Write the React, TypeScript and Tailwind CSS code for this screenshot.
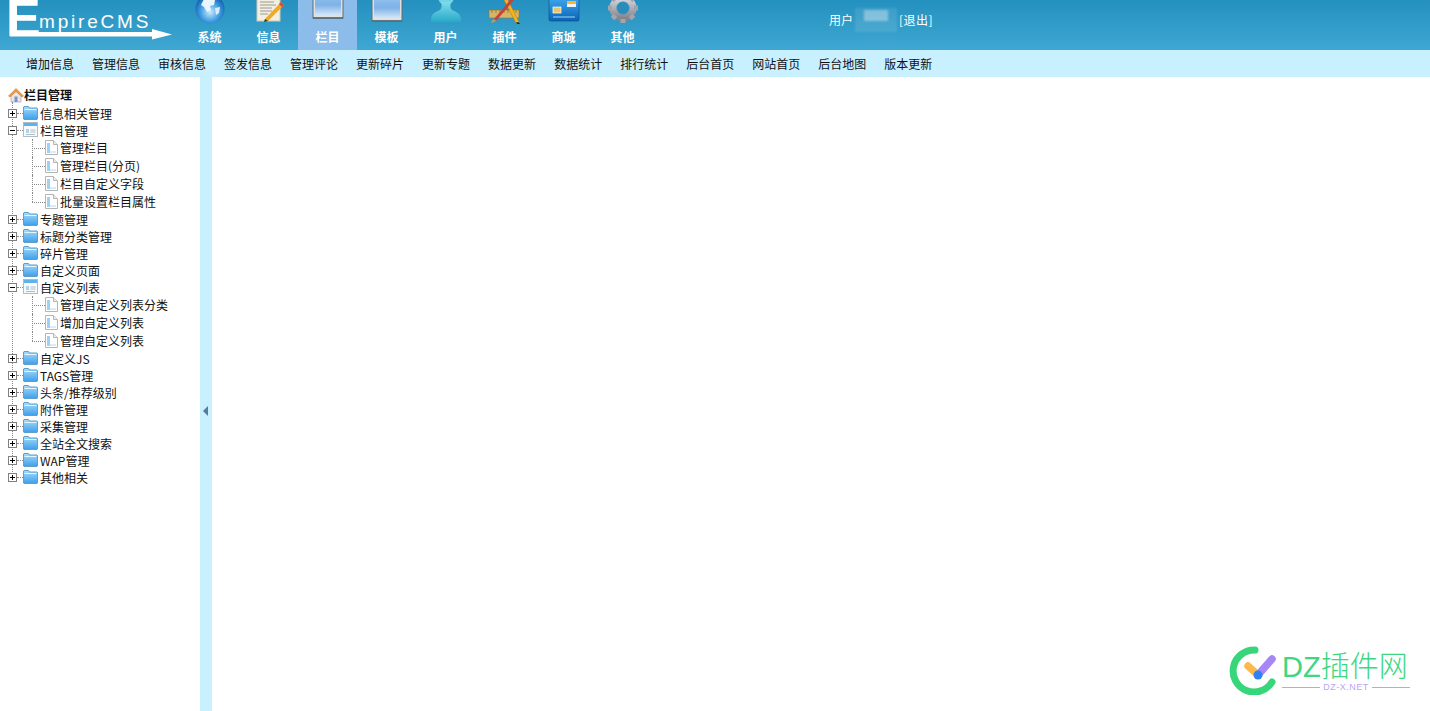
import React from "react";

const font = { fontFamily: '"Noto Sans CJK SC","Liberation Sans",sans-serif' };

const Globe = () => (
  <svg viewBox="0 0 30 46" className="w-[30px] h-[46px]">
    <defs>
      <radialGradient id="g1" cx="0.5" cy="0.6" r="0.6">
        <stop offset="0" stopColor="#cdeafc" />
        <stop offset="0.55" stopColor="#3f9ee2" />
        <stop offset="1" stopColor="#0e55a8" />
      </radialGradient>
    </defs>
    <circle cx="15" cy="31" r="14.500" fill="url(#g1)" />
    <path d="M9 21c4-2 8-1 11 1l-1 5-4 1 1 4-4 2-3-5-3-2z" fill="#e9f6ff" />
    <path d="M20 30l5-1-1 6-3 2z" fill="#d6eefc" />
  </svg>
);
const Note = () => (
  <svg viewBox="0 0 30 46" className="w-[30px] h-[46px]">
    <rect x="3" y="2" width="23" height="41" fill="#f3eee2" stroke="#cfc8b6" />
    <path d="M6 24h14M6 27h16M6 30h12M6 33h12M6 36h8M6 21h15" stroke="#9b9b90" strokeWidth="1" />
    <path d="M27 24l-16 17-1 3 4-1 16-16z" fill="#f2a81f" />
    <path d="M27 24l3 3-2 2-3-3z" fill="#d8483c" />
    <path d="M10 44l1-3 3 2z" fill="#333" />
  </svg>
);
const Win = ({ lift }: { lift?: boolean }) => (
  <svg viewBox="0 0 32 46" className={`w-[32px] h-[46px] ${lift ? "-translate-y-[3px]" : ""}`}>
    <defs>
      <linearGradient id="g2" x1="0" y1="0" x2="0" y2="1">
        <stop offset="0.45" stopColor="#8ec2f0" />
        <stop offset="0.72" stopColor="#7fb2e6" />
        <stop offset="1" stopColor="#d3e7f9" />
      </linearGradient>
    </defs>
    <rect x="1" y="2" width="30" height="41" fill="#dfe2e0" stroke="#5a6f7d" />
    <rect x="3" y="4" width="26" height="36" fill="url(#g2)" />
    <rect x="1" y="42" width="30" height="2" fill="#566a78" opacity="0.8" />
  </svg>
);
const User = () => (
  <svg viewBox="0 0 32 46" className="w-[32px] h-[46px]">
    <defs>
      <linearGradient id="g3" x1="0" y1="0" x2="0" y2="1">
        <stop offset="0" stopColor="#7fdcec" />
        <stop offset="1" stopColor="#27a9c8" />
      </linearGradient>
    </defs>
    <circle cx="16" cy="19" r="8" fill="#72d4e8" />
    <path d="M11 24c1 4 1 6-1 8-4 2-9 3-9 10v2h30v-2c0-7-5-8-9-10-2-2-2-4-1-8z" fill="url(#g3)" />
  </svg>
);
const Tools = () => (
  <svg viewBox="0 0 34 46" className="w-[34px] h-[46px]">
    <rect x="1" y="32" width="30" height="8" fill="#d7b564" stroke="#8f7434" strokeWidth="0.6" />
    <path d="M4 32v3M8 32v3M12 32v3M16 32v3M20 32v3M24 32v3M28 32v3" stroke="#77602a" strokeWidth="0.6" />
    <path d="M15 20l3-2 13 26-3 1z" fill="#f4b51c" stroke="#a97a10" strokeWidth="0.5" />
    <path d="M24 20L6 41l2 2 18-21z" fill="#c9403c" />
    <path d="M6 41l-3 3 1 1 4-2z" fill="#c99b52" />
    <path d="M28 45l2-1 2 2-2 0z" fill="#222" />
  </svg>
);
const Card = () => (
  <svg viewBox="0 0 32 46" className="w-[32px] h-[46px]">
    <defs>
      <linearGradient id="g4" x1="0" y1="0" x2="0" y2="1">
        <stop offset="0" stopColor="#3ca4ea" />
        <stop offset="1" stopColor="#0a62b6" />
      </linearGradient>
    </defs>
    <rect x="1" y="21" width="30" height="22" rx="1.500" fill="url(#g4)" stroke="#0c4a87" strokeWidth="0.6" />
    <rect x="5" y="29" width="8" height="6" fill="#e9c66d" stroke="#fff" strokeWidth="0.7" />
    <rect x="19" y="23" width="9" height="3" fill="#f8b82c" />
    <rect x="19" y="26" width="9" height="3" fill="#eef4fa" />
    <path d="M5 39h22" stroke="#8ac6ee" strokeWidth="1.200" />
  </svg>
);
const Gear = () => (
  <svg viewBox="0 0 30 46" className="w-[30px] h-[46px]">
    <defs>
      <linearGradient id="g5" x1="0" y1="0" x2="0" y2="1">
        <stop offset="0" stopColor="#d8d8de" />
        <stop offset="1" stopColor="#84848f" />
      </linearGradient>
    </defs>
    <circle cx="15" cy="30" r="10" fill="none" stroke="url(#g5)" strokeWidth="7" />
    <path
      d="M15 15v4M15 41v4M0 30h4M26 30h4M4.500 19.500l3 3M22.500 37.500l3 3M25.500 19.500l-3 3M7.500 37.500l-3 3"
      stroke="#a4a4ae"
      strokeWidth="5"
    />
    <circle cx="15" cy="30" r="5.500" fill="#2a8cbb" />
  </svg>
);

const top = [
  { label: "系统", Icon: () => <Globe /> },
  { label: "信息", Icon: () => <Note /> },
  { label: "栏目", Icon: () => <Win lift />, active: true },
  { label: "模板", Icon: () => <Win /> },
  { label: "用户", Icon: () => <User /> },
  { label: "插件", Icon: () => <Tools /> },
  { label: "商城", Icon: () => <Card /> },
  { label: "其他", Icon: () => <Gear /> },
];

const sub = ["增加信息", "管理信息", "审核信息", "签发信息", "管理评论", "更新碎片", "更新专题", "数据更新", "数据统计", "排行统计", "后台首页", "网站首页", "后台地图", "版本更新"];

const Box = ({ open }: { open?: boolean }) => (
  <svg width="9" height="9" viewBox="0 0 9 9" className="shrink-0">
    <rect x="0.5" y="0.5" width="8" height="8" fill="#fff" stroke="#808080" />
    <path d={open ? "M2 4.500h5" : "M2 4.500h5M4.500 2v5"} stroke="#000" />
  </svg>
);
const Folder = () => (
  <svg width="15" height="14" viewBox="0 0 15 14" className="shrink-0 -translate-y-[1px]">
    <defs>
      <linearGradient id="fd" x1="0" y1="0" x2="0" y2="1">
        <stop offset="0" stopColor="#a6dcfb" />
        <stop offset="1" stopColor="#3d9fea" />
      </linearGradient>
    </defs>
    <path d="M1 0.500h4.500l1 1.500h7.500l0.500 0.500v10.500l-0.500 0.500h-13l-0.500-0.500v-12z" fill="url(#fd)" stroke="#5f9fc9" />
    <path d="M1.500 3.500h12" stroke="#e2f4fe" />
  </svg>
);
const ListIcon = () => (
  <svg width="15" height="15" viewBox="0 0 15 15" className="shrink-0 -translate-y-[1px]">
    <rect x="0.500" y="0.500" width="14" height="14" fill="#f7f9fa" stroke="#b1bbc2" />
    <rect x="1" y="1" width="13" height="3" fill="#5cb2ea" />
    <rect x="3" y="7" width="3" height="4" fill="#a8d4f0" />
    <path d="M7.500 8h5M7.500 10h5M3 12.500h9" stroke="#b4bdc4" />
  </svg>
);
const Page = () => (
  <svg width="13" height="15" viewBox="0 0 13 15" className="shrink-0 -translate-y-[1px]">
    <path d="M0.500 0.500h8l4 4v10h-12z" fill="#fff" stroke="#b5b5b5" />
    <path d="M8.500 0.500v4h4" fill="#eee" stroke="#b5b5b5" />
    <rect x="2" y="3" width="3" height="10" fill="#9fd2f2" />
    <rect x="5" y="11" width="6" height="2" fill="#d8edf9" />
  </svg>
);
const Home = () => (
  <svg width="16" height="16" viewBox="0 0 16 16" className="shrink-0">
    <path d="M3 8v7h10V8L8 4z" fill="#e6e6ea" stroke="#a5a8b4" strokeWidth="0.7" />
    <path d="M0.500 9L8 1.500 15.500 9l-1.500 1L8 4.500 2 10z" fill="#f09a3e" stroke="#c9721f" strokeWidth="0.5" />
    <rect x="6.500" y="9.500" width="3" height="5.500" fill="#7d93c4" />
  </svg>
);

const Dots = ({ w }: { w: string }) => <span className={`${w} shrink-0 h-0 border-t border-dotted border-[#888]`} />;

type Node = { label: string; children?: string[] };
const tree: Node[] = [
  { label: "信息相关管理" },
  { label: "栏目管理", children: ["管理栏目", "管理栏目(分页)", "栏目自定义字段", "批量设置栏目属性"] },
  { label: "专题管理" },
  { label: "标题分类管理" },
  { label: "碎片管理" },
  { label: "自定义页面" },
  { label: "自定义列表", children: ["管理自定义列表分类", "增加自定义列表", "管理自定义列表"] },
  { label: "自定义JS" },
  { label: "TAGS管理" },
  { label: "头条/推荐级别" },
  { label: "附件管理" },
  { label: "采集管理" },
  { label: "全站全文搜索" },
  { label: "WAP管理" },
  { label: "其他相关" },
];

export default function App() {
  return (
    <div className="relative h-screen w-full overflow-hidden bg-white flex flex-col text-xs text-[#111]" style={font}>
      <header className="relative h-[50px] shrink-0 flex overflow-hidden bg-gradient-to-b from-[#2490bf] to-[#3ea7d2]">
        <div className="relative w-[180px] shrink-0">
          <span
            className="absolute left-[6px] top-0 text-[52px] leading-[36px] font-bold text-white"
            style={{ fontFamily: '"Liberation Sans",sans-serif' }}
          >
            E
          </span>
          <span
            className="absolute left-[39px] top-[12px] text-[19px] leading-[20px] tracking-[2.8px] text-white"
            style={{ fontFamily: '"Liberation Sans",sans-serif' }}
          >
            mpireCMS
          </span>
          <svg width="172" height="40" viewBox="0 0 172 40" className="absolute left-0 top-0">
            <path d="M10 32h142v-3l20 5.500-20 5v-3H10z" fill="#fff" />
          </svg>
        </div>
        <nav className="flex">
          {top.map(({ label, Icon, active }) => (
            <div key={label} className={`w-[59px] h-[50px] flex flex-col items-center ${active ? "bg-[#8bbcea]" : ""}`}>
              <div className="h-[24px] flex items-end justify-center">
                <Icon />
              </div>
              <span className="mt-[4px] leading-[18px] font-bold text-white">{label}</span>
            </div>
          ))}
        </nav>
        <div className="ml-[177px] flex items-center pb-[10px] text-white">
          <span>用户</span>
          <span className="ml-[2px] w-[42px] h-[24px] bg-white/10 blur-[1px] flex items-start justify-center pt-[2px]">
            <span className="w-[24px] h-[11px] bg-white/35" />
          </span>
          <span className="ml-[2px] tracking-[0.5px]">[退出]</span>
        </div>
      </header>

      <div className="h-[27px] shrink-0 bg-[#c9f0ff] flex items-center pl-[26px] gap-[18px] pt-[1px]">
        {sub.map((s) => (
          <span key={s} className="leading-[18px]">{s}</span>
        ))}
      </div>

      <div className="flex-1 flex min-h-0">
        <aside className="w-[200px] shrink-0 pl-[8px] pt-[10px] overflow-hidden">
          <div className="h-[16px] flex items-center">
            <Home />
            <span className="font-bold leading-[16px]">栏目管理</span>
          </div>
          <div className="relative mt-[2px]">
            <span className="absolute left-[4px] top-[-3px] h-[372px] border-l border-dotted border-[#888]" />
            {tree.map((n) => (
              <div key={n.label}>
                <div className="relative h-[17px] flex items-center">
                  <Box open={!!n.children} />
                  <Dots w="w-[6px]" />
                  {n.children ? <ListIcon /> : <Folder />}
                  <span className="ml-[2px] leading-[17px]">{n.label}</span>
                </div>
                {n.children?.map((c, i) => (
                  <div key={c} className="relative h-[18px] flex items-center pl-[24px]">
                    <span
                      className={`absolute left-[24px] top-0 border-l border-dotted border-[#888] ${
                        i === n.children!.length - 1 ? "h-[9px]" : "h-[18px]"
                      }`}
                    />
                    <Dots w="w-[13px]" />
                    <Page />
                    <span className="ml-[2px] leading-[18px]">{c}</span>
                  </div>
                ))}
              </div>
            ))}
          </div>
        </aside>
        <div className="w-[12px] shrink-0 bg-[#c9f0ff] flex items-center justify-center pt-[34px]">
          <span className="w-0 h-0 border-y-[5px] border-y-transparent border-r-[5px] border-r-[#4f7f9a] mr-[1px]" />
        </div>
        <main className="flex-1 bg-white" />
      </div>

      <div className="absolute right-[20px] bottom-[16px] w-[181px] h-[50px]">
        <svg width="50" height="50" viewBox="0 0 50 50" className="absolute left-0 top-0">
          <path d="M26 5A21 21 0 1 0 43 37" fill="none" stroke="#37d67a" strokeWidth="7" strokeLinecap="round" />
          <path d="M19 21l10 9" stroke="#fdb94a" strokeWidth="7.500" strokeLinecap="round" />
          <path d="M29 30L43 14" stroke="#a587f5" strokeWidth="7.500" strokeLinecap="round" />
          <circle cx="29" cy="30" r="4.500" fill="#2f82f5" />
        </svg>
        <span
          className="absolute left-[53px] top-[2px] text-[29px] leading-[34px] text-[#3ed781] whitespace-nowrap"
          style={{ fontFamily: '"Noto Sans CJK SC","Liberation Sans",sans-serif', fontWeight: 300 }}
        >
          <span style={{ fontFamily: '"Liberation Sans",sans-serif' }}>DZ</span>插件网
        </span>
        <div className="absolute left-[53px] top-[37px] w-[128px] flex items-center gap-[3px]">
          <span className="flex-1 h-px bg-[#b9a5f5]" />
          <span className="text-[9px] leading-[10px] tracking-[0.5px] text-[#b9a5f5]" style={{ fontFamily: '"Liberation Sans",sans-serif' }}>
            DZ-X.NET
          </span>
          <span className="flex-1 h-px bg-[#b9a5f5]" />
        </div>
      </div>
    </div>
  );
}
